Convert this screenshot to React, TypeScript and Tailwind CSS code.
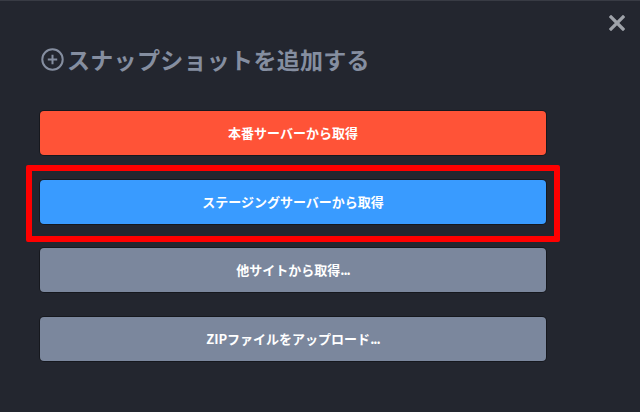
import React from "react";

const font = { fontFamily: '"Noto Sans CJK JP", "Noto Sans", sans-serif' };

function Btn({ label, color }: { label: React.ReactNode; color: string }) {
  return (
    <div
      className={`h-[44px] w-full rounded-[4px] ${color} flex items-center justify-center text-[13px] font-bold text-white shadow-[0_0_0_1px_rgba(0,0,0,0.35)]`}
    >
      {label}
    </div>
  );
}

export default function App() {
  return (
    <div
      className="relative w-[640px] h-[412px] overflow-hidden bg-[#23262f] border-t border-[#383b44]"
      style={font}
    >
      <button className="absolute right-[15px] top-[14px] w-[16px] h-[16px] text-[#9ea2a9]" aria-label="close">
        <svg viewBox="0 0 16 16" width="16" height="16">
          <path d="M2 2 L14 14 M14 2 L2 14" stroke="currentColor" strokeWidth="3.2" strokeLinecap="square" />
        </svg>
      </button>
      <div className="pl-[41px] pt-[44px] flex items-center gap-[3px] text-[#858ea0]">
        <svg viewBox="0 0 23 23" width="23" height="23" className="shrink-0">
          <circle cx="11.5" cy="11.5" r="10.2" fill="none" stroke="currentColor" strokeWidth="2" />
          <path d="M11.5 6.8 V16.2 M6.8 11.5 H16.2" stroke="currentColor" strokeWidth="2" />
        </svg>
        <span className="text-[23px] font-bold leading-[28px] tracking-[0.3px]">スナップショットを追加する</span>
      </div>
      <div className="pl-[40px] pr-[94px] pt-[38px] flex flex-col gap-[24.5px]">
        <Btn label="本番サーバーから取得" color="bg-[#ff5337]" />
        <div className="relative">
          <Btn label="ステージングサーバーから取得" color="bg-[#399bff]" />
          <div className="absolute left-[-14px] right-[-14px] top-[-15px] bottom-[-18px] border-[6px] border-[#ff0000] rounded-[2px] pointer-events-none" />
        </div>
        <Btn label={<span>他サイトから取得<span className="tracking-[-1px]">...</span></span>} color="bg-[#7b879d]" />
        <Btn label={<span>ZIPファイルをアップロード<span className="tracking-[-1px]">...</span></span>} color="bg-[#7b879d]" />
      </div>
    </div>
  );
}
